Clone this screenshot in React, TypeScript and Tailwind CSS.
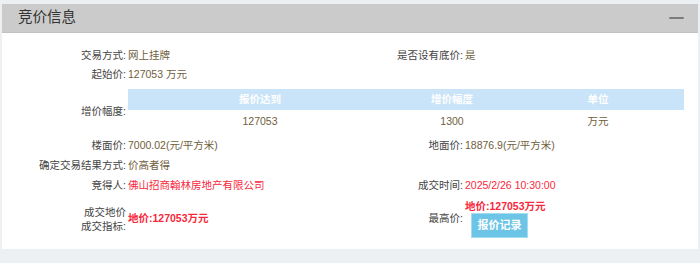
import React from 'react';

const font = { fontFamily: '"Liberation Sans", "Noto Sans CJK SC", sans-serif' };

const Label: React.FC<{ children: React.ReactNode; className?: string }> = ({ children, className = '' }) => (
  <div className={`text-right text-[#444] ${className}`}>{children}</div>
);

const App: React.FC = () => {
  return (
    <div className="w-[700px] h-[263px] bg-[#edf0f3] pt-[4px] px-[2px] text-[10.5px]" style={font}>
      <div className="w-[696px] bg-white">
        {/* header */}
        <div className="h-[29px] bg-[#cbcbcb] border-b border-[#c0c0c0] flex items-center justify-between pl-[16px] pr-[14px]">
          <span className="text-[14.5px] text-[#333]">竞价信息</span>
          <span className="w-[15px] h-[2px] bg-[#7c7c7c] rounded-sm" />
        </div>

        {/* body */}
        <div className="pt-[13px] pb-[8px]">
          <div className="flex items-center h-[19px]">
            <Label className="w-[124px]">交易方式:</Label>
            <div className="ml-[2px] w-[222px] text-[#6f5e3c]">网上挂牌</div>
            <Label className="w-[113px]">是否设有底价:</Label>
            <div className="ml-[2px] text-[#6f5e3c]">是</div>
          </div>
          <div className="flex items-center h-[19px]">
            <Label className="w-[124px]">起始价:</Label>
            <div className="ml-[2px] text-[#6f5e3c]">127053 万元</div>
          </div>

          {/* increment table */}
          <div className="flex items-center mt-[5px]">
            <Label className="w-[124px]">增价幅度:</Label>
            <div className="ml-[2px] w-[556px]">
              <div className="grid grid-cols-[264px_120px_172px] h-[21px] items-center bg-[#c9e4f8] text-white font-bold text-center">
                <div>报价达到</div>
                <div>增价幅度</div>
                <div>单位</div>
              </div>
              <div className="grid grid-cols-[264px_120px_172px] h-[24px] items-center text-center text-[#6f5e3c]">
                <div>127053</div>
                <div>1300</div>
                <div>万元</div>
              </div>
            </div>
          </div>

          <div className="flex items-center h-[20px] mt-[2px]">
            <Label className="w-[124px]">楼面价:</Label>
            <div className="ml-[2px] w-[222px] text-[#6f5e3c]">7000.02(元/平方米)</div>
            <Label className="w-[113px]">地面价:</Label>
            <div className="ml-[2px] text-[#6f5e3c]">18876.9(元/平方米)</div>
          </div>
          <div className="flex items-center h-[20px]">
            <Label className="w-[124px]">确定交易结果方式:</Label>
            <div className="ml-[2px] text-[#6f5e3c]">价高者得</div>
          </div>
          <div className="flex items-center h-[20px]">
            <Label className="w-[124px]">竞得人:</Label>
            <div className="ml-[2px] w-[222px] text-[#f8283c]">佛山招商翰林房地产有限公司</div>
            <Label className="w-[113px]">成交时间:</Label>
            <div className="ml-[2px] text-[#f8283c]">2025/2/26 10:30:00</div>
          </div>

          <div className="flex items-center h-[45px]">
            <Label className="w-[124px] leading-[14px]">
              <div>成交地价</div>
              <div>成交指标:</div>
            </Label>
            <div className="ml-[2px] w-[222px] text-[#f8283c] font-bold">地价:127053万元</div>
            <Label className="w-[113px]">最高价:</Label>
            <div className="ml-[2px] flex flex-col items-start">
              <div className="leading-[14px] text-[#f8283c] font-bold">地价:127053万元</div>
              <button className="ml-[6px] w-[57px] h-[25px] bg-[#6cc4e6] border border-[#a6dcf0] text-white font-bold text-[11px]">
                报价记录
              </button>
            </div>
          </div>
        </div>
      </div>
    </div>
  );
};

export default App;
